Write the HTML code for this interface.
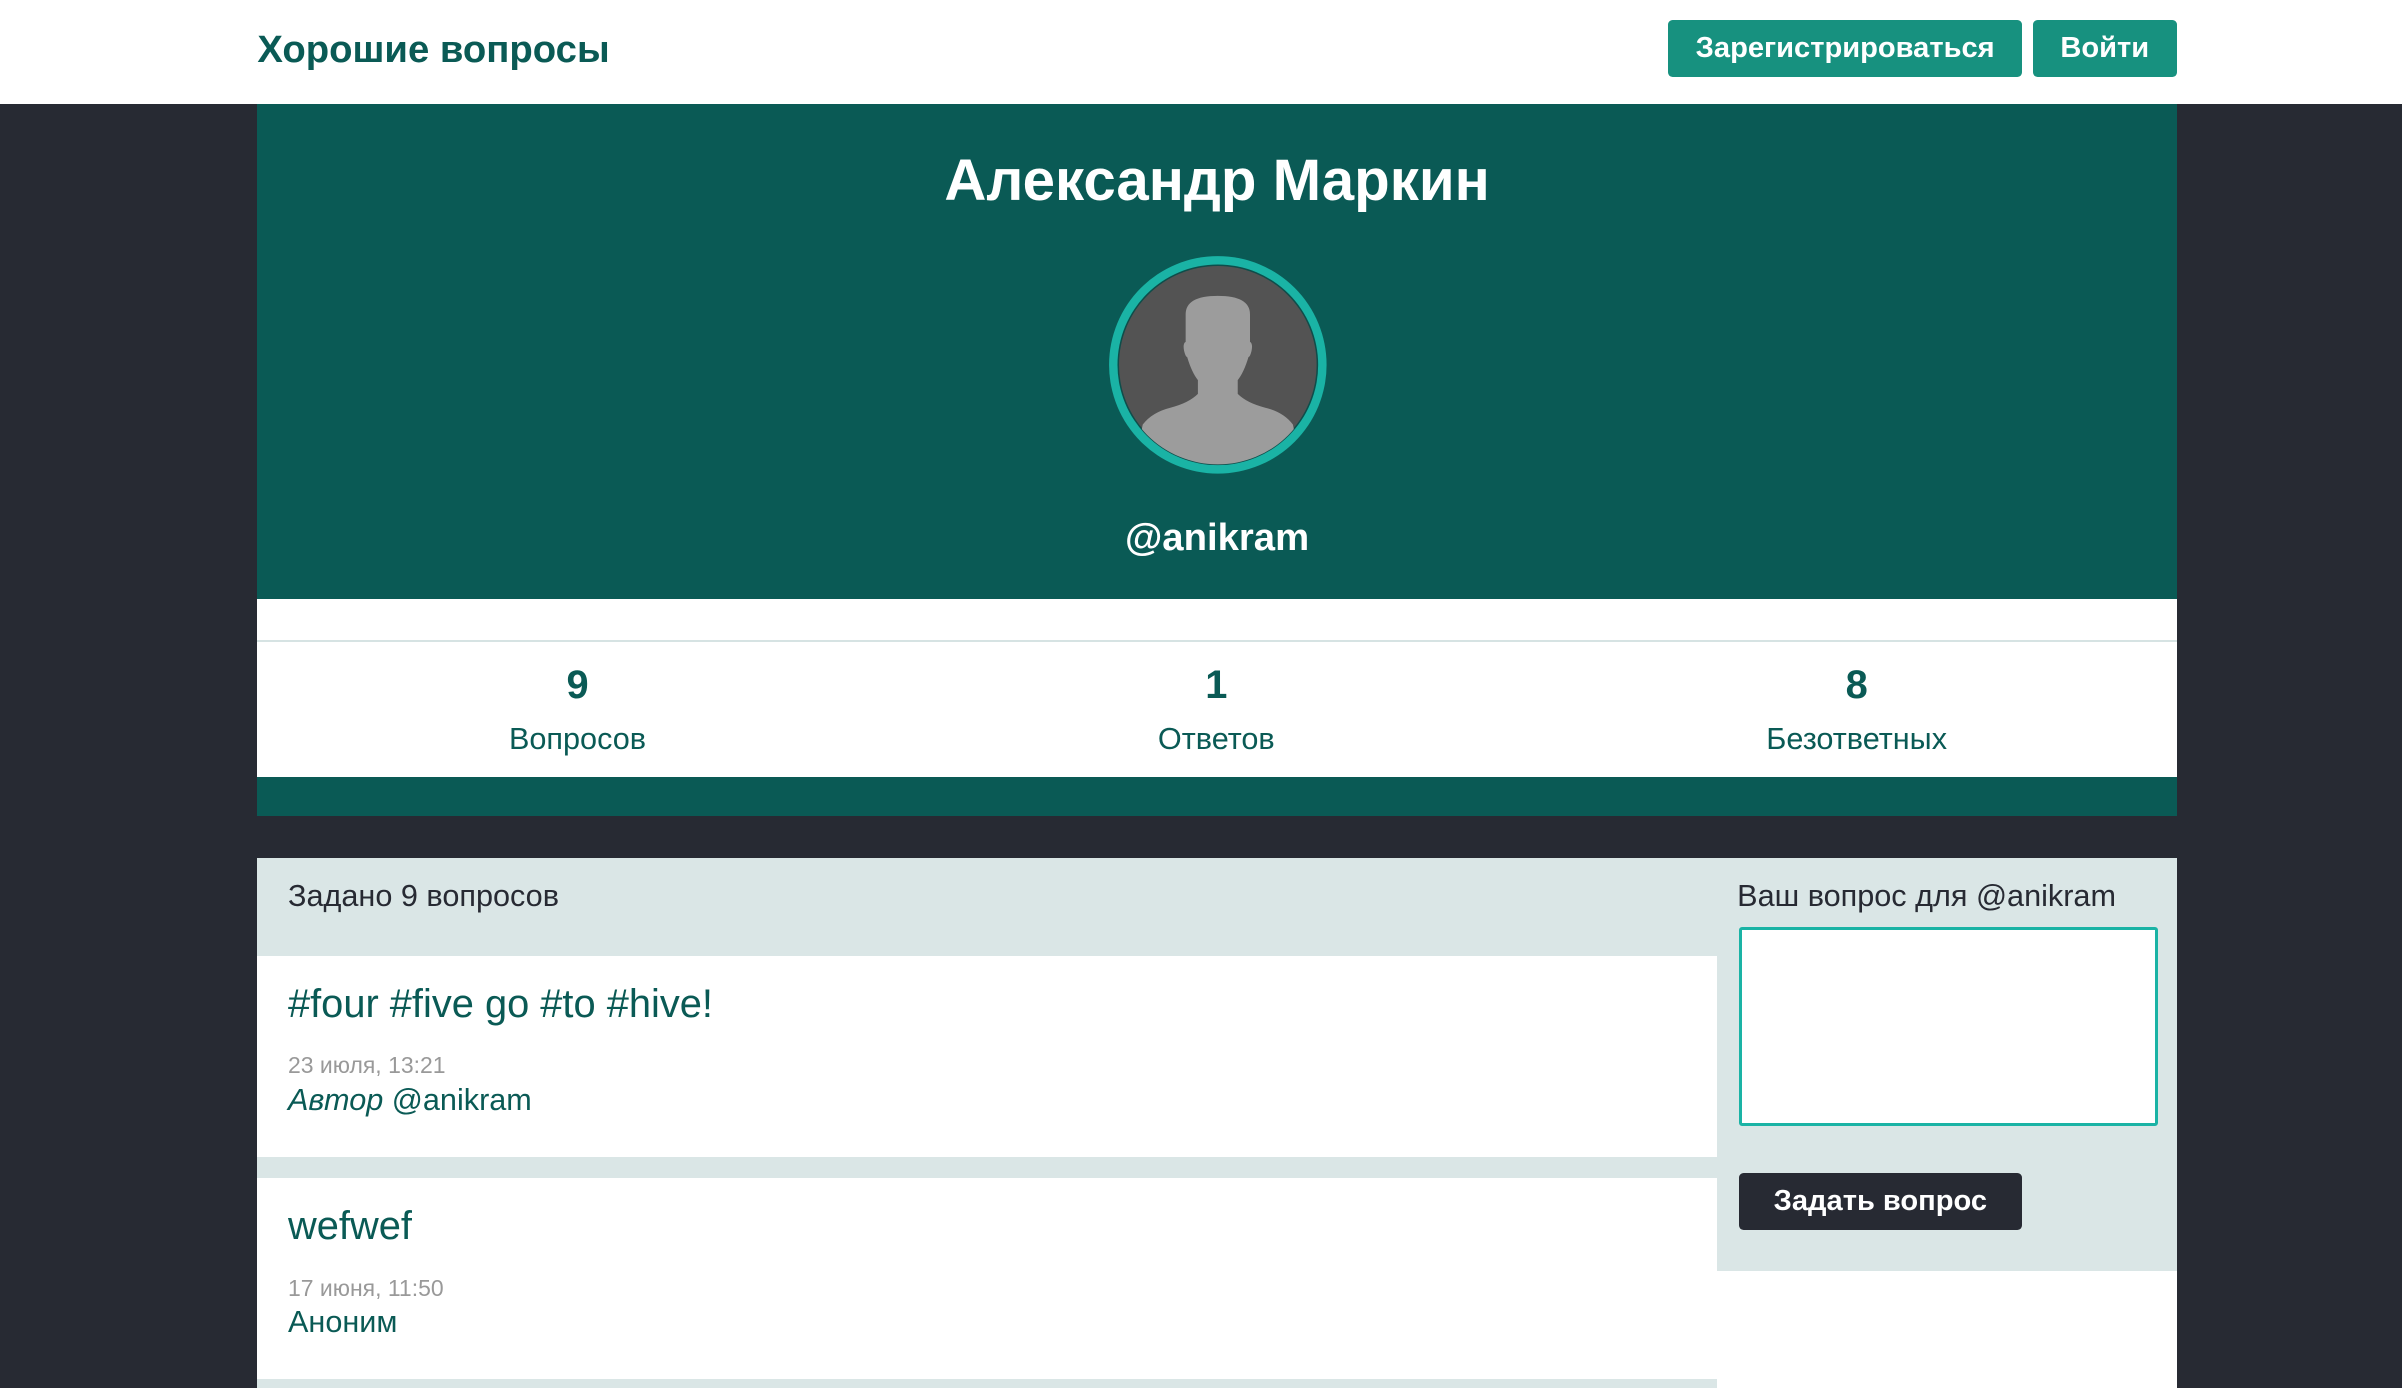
<!DOCTYPE html>
<html><head><meta charset="utf-8"><style>
html,body{margin:0;padding:0}
body{width:1568px;height:906px;overflow:hidden;zoom:1.53189;background:#272a33;font-family:"Liberation Sans",sans-serif;position:relative}
.a{position:absolute}
.hdr{left:0;top:0;width:1568px;height:68px;background:#fff}
.btn{background:#17917f;color:#fff;font-weight:bold;font-size:19px;border-radius:3px;text-align:center;line-height:37px;height:37px;top:13px}
.c{text-align:center}
</style></head><body>
<div class="a hdr"></div>
<div class="a" style="left:168px;top:18px;font-size:25px;font-weight:bold;color:#0a5a55">Хорошие вопросы</div>
<div class="a btn" style="left:1089px;width:231px">Зарегистрироваться</div>
<div class="a btn" style="left:1327px;width:94px">Войти</div>

<div class="a" style="left:168px;top:68px;width:1253px;height:323px;background:#0a5a55"></div>
<div class="a c" style="left:168px;width:1253px;top:96px;font-size:38px;font-weight:bold;color:#fff">Александр Маркин</div>
<svg class="a" style="left:722px;top:165px" width="146" height="146" viewBox="0 0 146 146">
<defs><clipPath id="cp"><circle cx="73" cy="73" r="65"/></clipPath></defs>
<circle cx="73" cy="73" r="71" fill="#1ab3a5"/>
<circle cx="73" cy="73" r="65.5" fill="#0e4d4a"/>
<circle cx="73" cy="73" r="64.5" fill="#535353"/>
<g clip-path="url(#cp)" fill="#9c9c9c">
<path d="M52 40 Q52 28 73 28 Q94 28 94 40 L94 58 Q96 59 95 64 Q94 68 93 68 Q90 78 86 83 L86 92 Q92 98 104 101 Q116 104 122 112 L130 150 L16 150 L24 112 Q30 104 42 101 Q54 98 60 92 L60 83 Q56 78 53 68 Q52 68 51 64 Q50 59 52 58 Z"/>
</g></svg>
<div class="a c" style="left:168px;width:1253px;top:337px;font-size:25px;font-weight:bold;color:#fff">@anikram</div>

<div class="a" style="left:168px;top:391px;width:1253px;height:116px;background:#fff"></div>
<div class="a" style="left:168px;top:418px;width:1253px;height:1px;background:#d6e3e3"></div>
<div class="a" style="left:168px;top:507px;width:1253px;height:26px;background:#0a5a55"></div>
<div class="a c" style="left:277px;width:200px;top:433px;font-size:26px;font-weight:bold;color:#0a5a55">9</div>
<div class="a c" style="left:277px;width:200px;top:471px;font-size:20px;color:#0a5a55">Вопросов</div>
<div class="a c" style="left:694px;width:200px;top:433px;font-size:26px;font-weight:bold;color:#0a5a55">1</div>
<div class="a c" style="left:694px;width:200px;top:471px;font-size:20px;color:#0a5a55">Ответов</div>
<div class="a c" style="left:1112px;width:200px;top:433px;font-size:26px;font-weight:bold;color:#0a5a55">8</div>
<div class="a c" style="left:1112px;width:200px;top:471px;font-size:20px;color:#0a5a55">Безответных</div>

<div class="a" style="left:168px;top:560px;width:1253px;height:346px;background:#dae6e6"></div>
<div class="a" style="left:1121px;top:830px;width:300px;height:76px;background:#fff"></div>
<div class="a" style="left:188px;top:574px;font-size:20px;color:#272a33">Задано 9 вопросов</div>
<div class="a" style="left:168px;top:624px;width:953px;height:131px;background:#fff"></div>
<div class="a" style="left:188px;top:641px;font-size:26px;color:#0a5a55">#four #five go #to #hive!</div>
<div class="a" style="left:188px;top:687px;font-size:15px;color:#999">23 июля, 13:21</div>
<div class="a" style="left:188px;top:707px;font-size:20px;color:#0a5a55"><i>Автор</i> @anikram</div>
<div class="a" style="left:168px;top:769px;width:953px;height:131px;background:#fff"></div>
<div class="a" style="left:188px;top:786px;font-size:26px;color:#0a5a55">wefwef</div>
<div class="a" style="left:188px;top:832px;font-size:15px;color:#999">17 июня, 11:50</div>
<div class="a" style="left:188px;top:852px;font-size:20px;color:#0a5a55">Аноним</div>

<div class="a" style="left:1134px;top:574px;font-size:20px;color:#272a33">Ваш вопрос для @anikram</div>
<div class="a" style="left:1135px;top:605px;width:270px;height:126px;background:#fff;border:2px solid #1ab3a5;border-radius:2px"></div>
<div class="a c" style="left:1135px;top:766px;width:185px;height:37px;line-height:37px;background:#272a33;color:#fff;font-weight:bold;font-size:19px;border-radius:3px">Задать вопрос</div>
</body></html>
